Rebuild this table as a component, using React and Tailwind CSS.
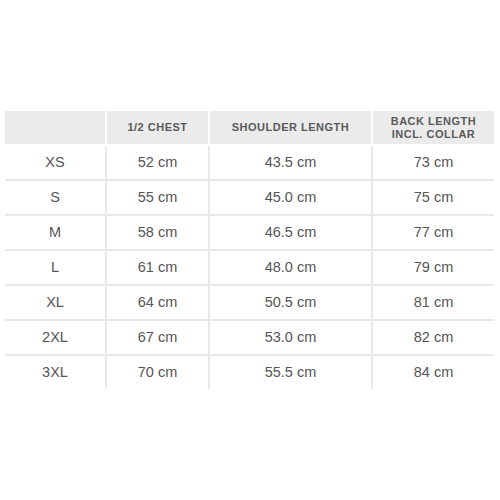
import React from "react";

const headers = ["", "1/2 CHEST", "SHOULDER LENGTH", "BACK LENGTH\nINCL. COLLAR"];

const rows = [
  ["XS", "52 cm", "43.5 cm", "73 cm"],
  ["S", "55 cm", "45.0 cm", "75 cm"],
  ["M", "58 cm", "46.5 cm", "77 cm"],
  ["L", "61 cm", "48.0 cm", "79 cm"],
  ["XL", "64 cm", "50.5 cm", "81 cm"],
  ["2XL", "67 cm", "53.0 cm", "82 cm"],
  ["3XL", "70 cm", "55.5 cm", "84 cm"],
];

const widths = ["w-[100px]", "w-[103px]", "w-[163px]", "w-[123px]"];

export default function App() {
  return (
    <div
      className="w-[500px] h-[500px] bg-white pt-[111px] pl-[5px]"
      style={{ fontFamily: '"Liberation Sans", Arial, sans-serif' }}
    >
      <div className="w-[489px]">
        {/* header */}
        <div className="flex h-[33px]">
          {headers.map((h, i) => (
            <div
              key={i}
              className={`${widths[i]} ${
                i > 0 ? "border-l-2 border-white" : ""
              } bg-[#ebebeb] flex items-center justify-center text-center whitespace-pre-line text-[11px] leading-[13px] font-bold tracking-[0.5px] text-[#5a5a5a]`}
            >
              {h}
            </div>
          ))}
        </div>

        {/* body */}
        {rows.map((r, ri) => (
          <div
            key={ri}
            className={`flex h-[35px] border-t-2 ${
              ri === 0 ? "border-white" : "border-[#e8e8e8]"
            }`}
          >
            {r.map((c, ci) => (
              <div
                key={ci}
                className={`${widths[ci]} ${
                  ci > 0 ? "border-l-2 border-[#e8e8e8]" : ""
                } flex items-center justify-center text-[14.5px] text-[#555555]`}
              >
                {c}
              </div>
            ))}
          </div>
        ))}
      </div>
    </div>
  );
}
